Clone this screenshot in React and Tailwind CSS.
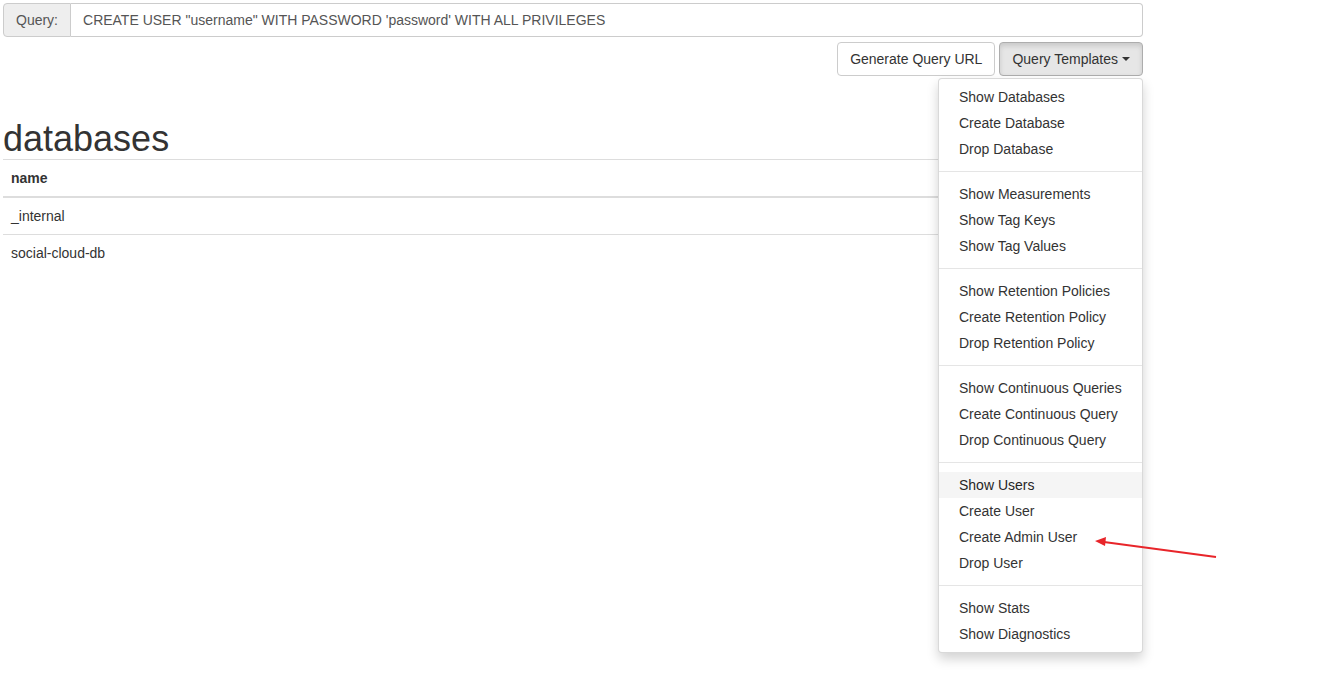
import React from 'react';

const groups = [
  ['Show Databases', 'Create Database', 'Drop Database'],
  ['Show Measurements', 'Show Tag Keys', 'Show Tag Values'],
  ['Show Retention Policies', 'Create Retention Policy', 'Drop Retention Policy'],
  ['Show Continuous Queries', 'Create Continuous Query', 'Drop Continuous Query'],
  ['Show Users', 'Create User', 'Create Admin User', 'Drop User'],
  ['Show Stats', 'Show Diagnostics'],
];

const TemplatesMenu = () => (
  <ul className="absolute right-0 top-full mt-[2px] w-[205px] py-[5px] bg-white border border-[rgba(0,0,0,0.15)] rounded-[4px] shadow-[0_6px_12px_rgba(0,0,0,0.175)] z-10">
    {groups.map((items, gi) => (
      <React.Fragment key={gi}>
        {gi > 0 && <li className="h-px my-[9px] bg-[#e5e5e5]" />}
        {items.map((label) => (
          <li
            key={label}
            className={`px-5 py-[3px] leading-5 whitespace-nowrap ${
              label === 'Show Users' ? 'bg-[#f5f5f5] text-[#262626]' : 'text-[#333]'
            }`}
          >
            {label}
          </li>
        ))}
      </React.Fragment>
    ))}
  </ul>
);

export default function App() {
  return (
    <div className="relative min-h-[674px] bg-white text-[14px] leading-5 text-[#333] font-['Liberation_Sans',Arial,sans-serif]">
      <div className="pl-[3px] pt-[3px] w-[1143px]">
        {/* Query input */}
        <div className="flex h-[34px]">
          <span className="flex items-center px-3 bg-[#eee] text-[#555] border border-[#ccc] rounded-l-[4px]">
            Query:
          </span>
          <div className="flex-1 flex items-center px-3 text-[#555] border border-l-0 border-[#ccc] rounded-r-[4px]">
            CREATE USER "username" WITH PASSWORD 'password' WITH ALL PRIVILEGES
          </div>
        </div>

        {/* Buttons */}
        <div className="flex justify-end gap-1 mt-[5px]">
          <button className="h-[34px] px-3 border border-[#ccc] rounded-[4px] bg-white text-[#333]">
            Generate Query URL
          </button>
          <div className="relative">
            <button className="h-[34px] px-3 border border-[#adadad] rounded-[4px] bg-[#e6e6e6] text-[#333] shadow-[inset_0_3px_5px_rgba(0,0,0,0.125)] flex items-center">
              Query Templates
              <span className="ml-[4px] w-0 h-0 border-l-4 border-r-4 border-t-4 border-l-transparent border-r-transparent border-t-[#333]" />
            </button>
            <TemplatesMenu />
          </div>
        </div>

        {/* Heading */}
        <h1 className="mt-[43px] text-[36px] leading-[39.6px] font-normal text-[#333]">databases</h1>

        {/* Table */}
        <table className="w-full border-collapse">
          <thead>
            <tr>
              <th className="text-left font-bold p-2 border-t border-[#ddd] border-b-2">name</th>
            </tr>
          </thead>
          <tbody>
            <tr>
              <td className="p-2">_internal</td>
            </tr>
            <tr>
              <td className="p-2 border-t border-[#ddd]">social-cloud-db</td>
            </tr>
          </tbody>
        </table>
      </div>

      {/* Annotation arrow */}
      <svg className="absolute left-0 top-0 z-20 pointer-events-none" width="1343" height="674">
        <line x1="1216" y1="557" x2="1104" y2="542" stroke="#e8252a" strokeWidth="2" />
        <polygon points="1095,541 1106,537 1105,546" fill="#e8252a" />
      </svg>
    </div>
  );
}
